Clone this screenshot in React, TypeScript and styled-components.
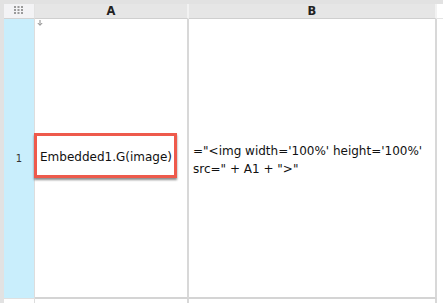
import { createGlobalStyle, styled } from 'styled-components';

const GlobalStyle = createGlobalStyle`
  html, body {
    margin: 0;
    padding: 0;
    background: #ffffff;
  }

  body {
    font-family: 'DejaVu Sans', Verdana, sans-serif;
  }
`;

function GridIcon() {
  return (
    <svg width="10" height="9" viewBox="0 0 10 9">
      {[0, 1, 2].map((r) =>
        [0, 1, 2].map((c) => (
          <rect key={`${r}-${c}`} x={c * 3.5} y={r * 3} width="2" height="2" fill="#9a9a9a" />
        )),
      )}
    </svg>
  );
}

function DownArrow() {
  return (
    <svg width="6" height="6" viewBox="0 0 6 6">
      <path d="M3 0 V5 M0.8 3 L3 5.4 L5.2 3" stroke="#8a8a8a" strokeWidth="1" fill="none" />
    </svg>
  );
}

function App() {
  return (
    <>
      <GlobalStyle />
      <Screen>
        <Sheet>
          <Corner>
            <GridIcon />
          </Corner>
          <ColumnHeader>A</ColumnHeader>
          <ColumnHeader>B</ColumnHeader>
          <Spacer $head />

          <RowHeader $selected>1</RowHeader>
          <Cell>
            <CornerArrow>
              <DownArrow />
            </CornerArrow>
            <Highlight>Embedded1.G(image)</Highlight>
          </Cell>
          <Cell>
            ="&lt;img width='100%' height='100%'
            <br />
            src=" + A1 + "&gt;"
          </Cell>
          <Spacer />

          <RowHeader />
          <Cell $last />
          <Cell $last />
          <Spacer />
        </Sheet>
      </Screen>
    </>
  );
}

const Screen = styled.div`
  width: 443px;
  height: 303px;
  box-sizing: border-box;
  overflow: hidden;

  border-top: 4px solid #e2e2e2;
  border-left: 4px solid #e2e2e2;
  background: #ffffff;
`;

const Sheet = styled.div`
  display: grid;
  grid-template-columns: 31px 154px 248px 1fr;
  grid-template-rows: 15px 280px 20px;
`;

const Corner = styled.div`
  display: flex;
  align-items: center;
  justify-content: center;

  box-sizing: border-box;
  padding-bottom: 1px;
  background: #f3f3f5;
  border-bottom: 1px solid #d2d2d2;
  border-right: 1px solid #e2e2e2;
`;

const ColumnHeader = styled.div`
  display: flex;
  align-items: center;
  justify-content: center;

  box-sizing: border-box;
  background: #e6e6e6;
  border-bottom: 1px solid #cfcfcf;
  border-right: 2px solid #f2f2f2;

  font-size: 11.5px;
  font-weight: bold;
  color: #222222;
`;

const Spacer = styled.div<{ $head?: boolean }>`
  background: #ffffff;
  border-bottom: ${({ $head }) => ($head ? '1px solid #e4e4e4' : 'none')};
`;

const RowHeader = styled.div<{ $selected?: boolean }>`
  display: flex;
  align-items: center;
  justify-content: center;

  box-sizing: border-box;
  background: ${({ $selected }) => ($selected ? '#c9eefc' : '#ffffff')};
  border-bottom: 1px solid #e0e0e0;
  border-right: 1px solid #dddddd;

  font-size: 10px;
  color: #333333;
`;

const Cell = styled.div<{ $last?: boolean }>`
  position: relative;
  display: flex;
  flex-direction: column;
  justify-content: center;

  box-sizing: border-box;
  padding: 3px 4px 0;
  background: #ffffff;
  border-right: 2px solid #d8d8d8;
  border-bottom: ${({ $last }) => ($last ? 'none' : '2px solid #d4d4d4')};

  font-size: 12px;
  line-height: 18px;
  color: #111111;
  white-space: nowrap;
`;

const CornerArrow = styled.span`
  position: absolute;
  top: 1px;
  left: 2px;
  line-height: 0;
`;

const Highlight = styled.div`
  position: absolute;
  top: 114px;
  left: -1px;

  display: flex;
  align-items: center;

  box-sizing: border-box;
  width: 143px;
  height: 45px;
  padding: 2px 0 0 3px;
  background: #ffffff;
  border: 3px solid #ee5a4c;
  box-shadow: 0 2px 2px rgba(0, 0, 0, 0.45);

  font-size: 12px;
  color: #111111;
`;

export default App;
